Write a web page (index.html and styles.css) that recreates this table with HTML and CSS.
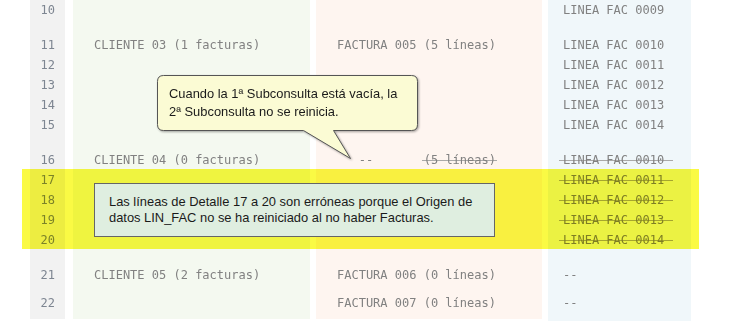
FILE: index.html
```html
<!DOCTYPE html>
<html lang="es">
<head>
<meta charset="utf-8">
<title>Subconsultas</title>
<link rel="stylesheet" href="styles.css">
</head>
<body>
<div class="page">
  <div class="cols">
    <div class="col gutter">
      <div class="r">10</div>
      <div class="g"><div class="r">11</div><div class="r">12</div><div class="r">13</div><div class="r">14</div><div class="r">15</div></div>
      <div class="g"><div class="r">16</div><div class="r">17</div><div class="r">18</div><div class="r">19</div><div class="r">20</div></div>
      <div class="g"><div class="r">21</div></div>
      <div class="g last"><div class="r">22</div></div>
    </div>
    <div class="col cli">
      <div class="r"></div>
      <div class="g"><div class="r">CLIENTE 03 (1 facturas)</div><div class="r"></div><div class="r"></div><div class="r"></div><div class="r"></div></div>
      <div class="g"><div class="r">CLIENTE 04 (0 facturas)</div><div class="r"></div><div class="r"></div><div class="r"></div><div class="r"></div></div>
      <div class="g"><div class="r">CLIENTE 05 (2 facturas)</div></div>
      <div class="g last"><div class="r"></div></div>
    </div>
    <div class="col fac">
      <div class="r"></div>
      <div class="g"><div class="r">FACTURA 005 (5 líneas)</div><div class="r"></div><div class="r"></div><div class="r"></div><div class="r"></div></div>
      <div class="g"><div class="r">   --       <span class="st st-fac">(5 líneas)</span></div><div class="r"></div><div class="r"></div><div class="r"></div><div class="r"></div></div>
      <div class="g"><div class="r">FACTURA 006 (0 líneas)</div></div>
      <div class="g last"><div class="r">FACTURA 007 (0 líneas)</div></div>
    </div>
    <div class="col lin">
      <div class="r">LINEA FAC 0009</div>
      <div class="g"><div class="r">LINEA FAC 0010</div><div class="r">LINEA FAC 0011</div><div class="r">LINEA FAC 0012</div><div class="r">LINEA FAC 0013</div><div class="r">LINEA FAC 0014</div></div>
      <div class="g"><div class="r"><span class="st">LINEA FAC 0010</span></div><div class="r"><span class="st">LINEA FAC 0011</span></div><div class="r"><span class="st">LINEA FAC 0012</span></div><div class="r"><span class="st">LINEA FAC 0013</span></div><div class="r"><span class="st">LINEA FAC 0014</span></div></div>
      <div class="g"><div class="r">--</div></div>
      <div class="g last"><div class="r">--</div></div>
    </div>
  </div>

  <div class="hl"></div>

  <div class="note1">
    <svg class="bubble" width="280" height="95" viewBox="0 0 280 95">
      <path d="M13.5 5.5 H261.5 Q267.5 5.5 267.5 11.5 V54.5 Q267.5 60.5 261.5 60.5 H183.5 L200.5 88.5 L153.5 60.5 H13.5 Q7.5 60.5 7.5 54.5 V11.5 Q7.5 5.5 13.5 5.5 Z" fill="#fbfbd4" stroke="#555" stroke-width="1"/>
    </svg>
    <p class="note1-text">Cuando la 1ª Subconsulta está vacía, la<br>2ª Subconsulta no se reinicia.</p>
  </div>

  <div class="note2">Las líneas de Detalle 17 a 20 son erróneas porque el Origen de<br>datos LIN_FAC no se ha reiniciado al no haber Facturas.</div>
</div>
</body>
</html>
```
FILE: styles.css
```css
html, body {
  margin: 0;
  padding: 0;
  background: #fff;
}
.page {
  position: relative;
  width: 733px;
  height: 324px;
  overflow: hidden;
  background: #fff;
}
.cols {
  display: flex;
  padding-left: 30px;
  align-items: flex-start;
}
.col {
  font-family: "DejaVu Sans Mono", "Liberation Mono", monospace;
  font-size: 12px;
  color: #818181;
  padding-bottom: 6px;
}
.r {
  height: 20px;
  line-height: 20px;
  white-space: pre;
}
.g { margin-top: 15px; }
.g.last { margin-top: 8px; }

.gutter {
  width: 35px;
  box-sizing: border-box;
  padding-right: 10px;
  text-align: right;
  background: #f2f2f2;
  color: #7d8591;
  margin-right: 8px;
}
.cli {
  width: 237px;
  box-sizing: border-box;
  padding-left: 21px;
  background: #f4f9f0;
  margin-right: 6px;
}
.fac {
  width: 226px;
  box-sizing: border-box;
  padding-left: 21px;
  background: #fef5f0;
  margin-right: 6px;
}
.lin {
  width: 143px;
  box-sizing: border-box;
  padding-left: 15px;
  background: #f0f7fa;
  padding-bottom: 8px;
}
.st {
  background: linear-gradient(#a9a9a9, #a9a9a9) no-repeat 0 55% / 100% 1px;
  padding: 0 9px 0 4px;
  margin-left: -4px;
}
.st.st-fac {
  padding: 0 1px 0 2px;
  margin-left: -2px;
}
.hl {
  position: absolute;
  left: 22px;
  top: 169px;
  width: 677px;
  height: 80px;
  background: #fafa44;
  mix-blend-mode: multiply;
}
.note1 {
  position: absolute;
  left: 150px;
  top: 70px;
  width: 280px;
  height: 95px;
}
.bubble {
  position: absolute;
  left: 0;
  top: 0;
  filter: drop-shadow(1px 1px 1px rgba(0, 0, 0, 0.35));
}
.note1-text {
  position: absolute;
  left: 19px;
  top: 15px;
  margin: 0;
  font-family: "Liberation Sans", Arial, sans-serif;
  font-size: 12.9px;
  line-height: 18px;
  color: #1a1a1a;
  white-space: nowrap;
}
.note2 {
  position: absolute;
  left: 94px;
  top: 183px;
  width: 401px;
  height: 54px;
  box-sizing: border-box;
  padding: 10px 0 0 14px;
  border: 1px solid #666;
  background: #dfeee0;
  font-family: "Liberation Sans", Arial, sans-serif;
  font-size: 12.9px;
  line-height: 16px;
  color: #1a1a1a;
  white-space: nowrap;
}
```
